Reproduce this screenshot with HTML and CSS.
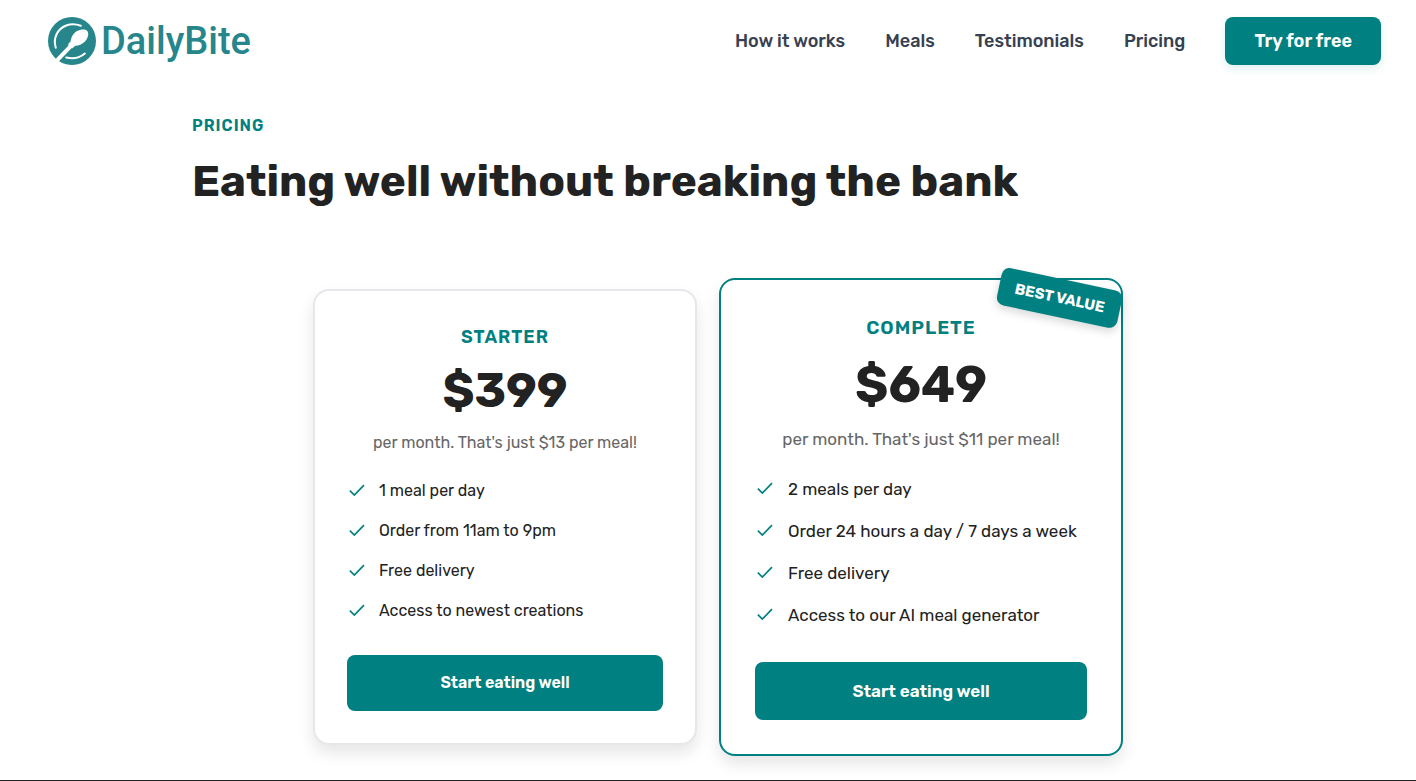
FILE: index.html
```html
<!DOCTYPE html>
<html lang="en">
<head>
<meta charset="utf-8">
<meta name="viewport" content="width=device-width, initial-scale=1">
<title>DailyBite – Pricing</title>
<link rel="stylesheet" href="styles.css">
</head>
<body>
<svg class="sprite" aria-hidden="true">
  <symbol id="check" viewBox="0 0 24 24">
    <path d="M3.4 11.6 8.8 16.8 20.4 5" fill="none" stroke="currentColor" stroke-width="2"/>
  </symbol>
</svg>
<header class="header">
  <a class="logo" href="#">
    <svg class="logo-mark" viewBox="23 28 142 142" aria-hidden="true">
      <circle cx="94" cy="99" r="71" fill="#26868b"/>
      <g fill="none" stroke="#fff" stroke-linecap="round">
        <path d="M46 119C37 90 51 63 77 53Q98 46 120 54" stroke-width="6"/>
        <path d="M77 148Q108 156 132 136" stroke-width="6"/>
        <path d="M44 162 98 106" stroke-width="12" stroke-linecap="butt"/>
      </g>
      <path d="M90 100C92 84 102 70 119 66C134 63 143 68 142 81C139 98 126 111 104 113L94 121 82 109Z" fill="#fff"/>
    </svg>
    <span class="logo-name">DailyBite</span>
  </a>
  <nav class="nav" aria-label="Main">
    <a href="#how">How it works</a>
    <a href="#meals">Meals</a>
    <a href="#testimonials">Testimonials</a>
    <a href="#pricing">Pricing</a>
    <a class="nav-cta" href="#cta">Try for free</a>
  </nav>
</header>
<main class="pricing" id="pricing">
  <p class="eyebrow">Pricing</p>
  <h1 class="title">Eating well without breaking the bank</h1>
  <div class="plans">
    <section class="plan">
      <h2 class="plan-name">Starter</h2>
      <p class="price">$399</p>
      <p class="price-note">per month. That's just $13 per meal!</p>
      <ul class="features">
        <li><svg class="check"><use href="#check"/></svg>1 meal per day</li>
        <li><svg class="check"><use href="#check"/></svg>Order from 11am to 9pm</li>
        <li><svg class="check"><use href="#check"/></svg>Free delivery</li>
        <li><svg class="check"><use href="#check"/></svg>Access to newest creations</li>
      </ul>
      <a class="plan-cta" href="#cta">Start eating well</a>
    </section>
    <section class="plan plan-featured">
      <span class="badge">Best value</span>
      <h2 class="plan-name">Complete</h2>
      <p class="price">$649</p>
      <p class="price-note">per month. That's just $11 per meal!</p>
      <ul class="features">
        <li><svg class="check"><use href="#check"/></svg>2 meals per day</li>
        <li><svg class="check"><use href="#check"/></svg>Order 24 hours a day / 7 days a week</li>
        <li><svg class="check"><use href="#check"/></svg>Free delivery</li>
        <li><svg class="check"><use href="#check"/></svg>Access to our AI meal generator</li>
      </ul>
      <a class="plan-cta" href="#cta">Start eating well</a>
    </section>
  </div>
</main>
<footer class="footer"></footer>
</body>
</html>
```
FILE: styles.css
```css
* { box-sizing: border-box; margin: 0; padding: 0; }
body { font-family: Rubik, Inter, sans-serif; color: #222; background: #fff; }
a { color: inherit; text-decoration: none; }
.sprite { position: absolute; width: 0; height: 0; }

.header { display: flex; align-items: center; justify-content: space-between; height: 82px; padding: 0 35px 0 48px; }
.logo { display: flex; align-items: center; gap: 5px; }
.logo-mark { width: 48px; height: 48px; }
.logo-name { font: 500 38px/48px Roboto, sans-serif; color: #26868b; }
.nav { display: flex; align-items: center; gap: 40px; font-size: 18px; font-weight: 500; color: #374151; }
.nav-cta { padding: 0 29px; line-height: 48px; border-radius: 8px; background: teal; color: #fff; font-weight: 600; box-shadow: 0 4px 8px rgba(0, 128, 128, .12); }

.pricing { padding: 32px 172px 24px 192px; }
.eyebrow { font-size: 16px; line-height: 24px; font-weight: 600; letter-spacing: 1px; text-transform: uppercase; color: teal; }
.title { margin-top: 16px; font-size: 44px; line-height: 54px; font-weight: 700; }
.plans { display: flex; justify-content: center; align-items: center; gap: 22px; margin-top: 70px; }

.plan { position: relative; flex: 0 1 384px; padding: 32px; border: 2px solid #e5e7eb; border-radius: 16px; background: #fff; box-shadow: 0 8px 16px rgba(0, 0, 0, .1); text-align: center; }
.plan-name { font-size: 18px; line-height: 28px; font-weight: 600; letter-spacing: 1px; text-transform: uppercase; color: teal; }
.price { margin-top: 14px; font-size: 48px; line-height: 52px; font-weight: 700; }
.price-note { margin-top: 14px; font-size: 16px; line-height: 24px; color: #666; }
.features { display: grid; gap: 16px; margin-top: 24px; list-style: none; text-align: left; }
.features li { display: flex; align-items: center; gap: 12px; font-size: 16px; line-height: 24px; }
.check { width: 20px; height: 20px; color: teal; }
.plan-cta { display: block; margin-top: 32px; border-radius: 8px; background: teal; color: #fff; font-size: 16px; line-height: 56px; font-weight: 600; }

.plan-featured { flex-basis: 404px; padding: 34px; border-color: teal; }
.plan-featured .plan-name { font-size: 19px; }
.plan-featured .price { margin-top: 16px; font-size: 50px; line-height: 54px; }
.plan-featured .price-note { margin-top: 15px; font-size: 17px; }
.plan-featured .features { gap: 18px; margin-top: 26px; }
.plan-featured .features li { gap: 13px; font-size: 17px; }
.plan-featured .plan-cta { margin-top: 35px; font-size: 17px; line-height: 58px; }
.badge { position: absolute; top: -1px; right: 0; padding: 0 16px; border-radius: 8px; background: teal; color: #fff; font-size: 15px; line-height: 38px; font-weight: 700; text-transform: uppercase; transform: rotate(12deg); box-shadow: 0 4px 8px rgba(0, 0, 0, .15); }

.footer { border-top: 1px solid #222; }
```
